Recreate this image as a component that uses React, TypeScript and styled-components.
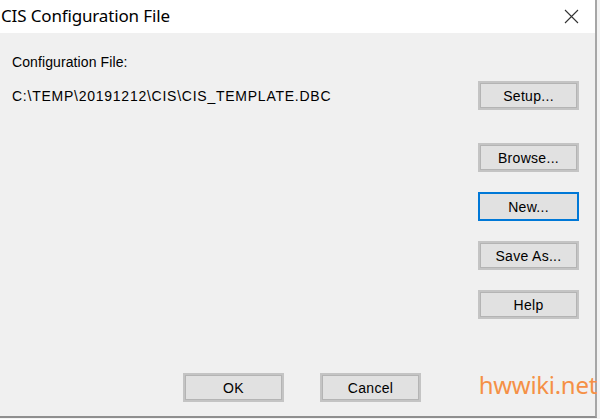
import React from "react";
import styled, { createGlobalStyle } from "styled-components";

const Global = createGlobalStyle`
  html, body { margin: 0; padding: 0; background: #f0f0f0; }
  body { width: 600px; height: 419px; overflow: hidden; }
`;

const Screen = styled.div`
  width: 600px;
  height: 419px;
  display: flex;
  flex-direction: column;
  background: #f3f3f3;
`;

const Window = styled.div`
  width: 595px;
  height: 416px;
  display: flex;
  flex-direction: column;
  background: #f0f0f0;
  border-right: 2px solid #a6a6a6;
  border-bottom: 2px solid #8f8f8f;
`;

const TitleBar = styled.div`
  height: 33px;
  flex: none;
  background: #ffffff;
  display: flex;
  align-items: center;
  justify-content: space-between;
  padding-left: 1px;
`;

const Title = styled.span`
  font-family: "Noto Sans", "Open Sans", sans-serif;
  font-size: 17px;
  color: #000;
  letter-spacing: -0.15px;
  margin-top: -2px;
`;

const CloseBtn = styled.div`
  width: 44px;
  height: 33px;
  display: flex;
  align-items: center;
  justify-content: center;
  margin-right: 2px;
`;

const Body = styled.div`
  flex: 1;
  display: flex;
  flex-direction: column;
  padding: 0 16px 0 12px;
  font-family: "Liberation Sans", Arial, sans-serif;
  font-size: 14px;
  color: #000;
`;

const Label = styled.div`
  margin-top: 20px;
  height: 18px;
  line-height: 18px;
  letter-spacing: 0.1px;
`;

const PathRow = styled.div`
  margin-top: 10px;
  display: flex;
  align-items: center;
  justify-content: space-between;
`;

const PathText = styled.span`
  letter-spacing: 0.75px;
`;

const ButtonColumn = styled.div`
  display: flex;
  flex-direction: column;
  align-items: flex-end;
  gap: 20px;
  margin-top: 33px;
`;

const Button = styled.button<{ $focused?: boolean }>`
  width: 101px;
  height: 29px;
  box-sizing: border-box;
  background: #e1e1e1;
  border: 2px solid ${(p) => (p.$focused ? "#0078d7" : "#c4c4c4")};
  box-shadow: ${(p) => (p.$focused ? "none" : "inset 0 0 0 1px #b4b4b4")};
  border-radius: 0;
  padding: 0;
  font-family: "Liberation Sans", Arial, sans-serif;
  font-size: 14px;
  color: #000;
  letter-spacing: 0.3px;
  cursor: default;
`;

const Footer = styled.div`
  margin-top: auto;
  margin-bottom: 14px;
  display: flex;
  align-items: center;
`;

const FooterButtons = styled.div`
  display: flex;
  gap: 36px;
  margin-left: 171px;
`;

const Watermark = styled.span`
  margin-left: auto;
  margin-right: -18px;
  margin-top: -6px;
  font-family: "Noto Sans", "Open Sans", sans-serif;
  font-size: 24px;
  color: #f59046;
  letter-spacing: -0.3px;
  position: relative;
  z-index: 1;
`;

export default function App() {
  return (
    <>
      <Global />
      <Screen>
        <Window>
          <TitleBar>
            <Title>CIS Configuration File</Title>
            <CloseBtn>
              <svg width="15" height="15" viewBox="0 0 15 15">
                <path d="M1 1 L14 14 M14 1 L1 14" stroke="#333" strokeWidth="1.1" fill="none" />
              </svg>
            </CloseBtn>
          </TitleBar>
          <Body>
            <Label>Configuration File:</Label>
            <PathRow>
              <PathText>C:\TEMP\20191212\CIS\CIS_TEMPLATE.DBC</PathText>
              <Button>Setup...</Button>
            </PathRow>
            <ButtonColumn>
              <Button>Browse...</Button>
              <Button $focused>New...</Button>
              <Button>Save As...</Button>
              <Button>Help</Button>
            </ButtonColumn>
            <Footer>
              <FooterButtons>
                <Button>OK</Button>
                <Button>Cancel</Button>
              </FooterButtons>
              <Watermark>hwwiki.net</Watermark>
            </Footer>
          </Body>
        </Window>
      </Screen>
    </>
  );
}
